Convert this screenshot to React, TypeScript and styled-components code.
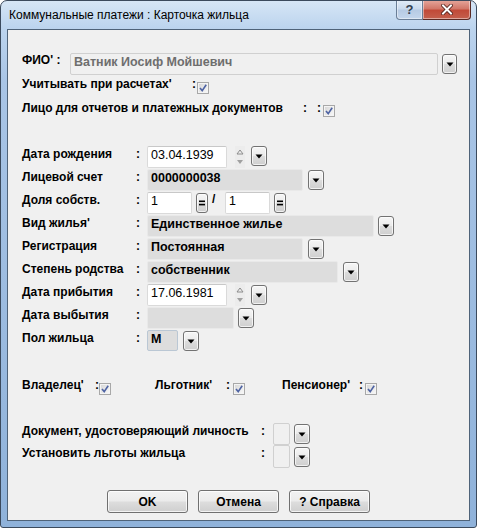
import React from "react";
import styled, { createGlobalStyle } from "styled-components";

const GlobalStyle = createGlobalStyle`
  html, body {
    margin: 0;
    padding: 0;
    background: #ffffff;
  }
  body {
    font-family: "Liberation Sans", Arial, sans-serif;
  }
`;

const Window = styled.div`
  width: 477px;
  height: 528px;
  box-sizing: border-box;
  border: 1px solid #3b4a5d;
  border-radius: 7px 7px 3px 3px;
  background: linear-gradient(
    to bottom,
    #d6e6f6 0px,
    #bcd4ee 27px,
    #a9c5e6 80px,
    #8fb2da 100%
  );
  display: flex;
  flex-direction: column;
  overflow: hidden;
`;

const TitleBar = styled.div`
  height: 28px;
  display: flex;
  align-items: center;
  padding-left: 8px;
  flex-shrink: 0;
`;

const Title = styled.div`
  flex: 1;
  font: 12px "Liberation Sans", Arial, sans-serif;
  color: #000;
`;

const CaptionButtons = styled.div`
  align-self: flex-start;
  margin-top: -1px;
  margin-right: 5px;
  display: flex;
`;

const CaptionButton = styled.div<{ $close?: boolean }>`
  height: 20px;
  width: ${({ $close }) => ($close ? "48px" : "27px")};
  box-sizing: border-box;
  display: flex;
  align-items: center;
  justify-content: center;
  border: 1px solid ${({ $close }) => ($close ? "#5a2a24" : "#6a7e97")};
  border-top: none;
  border-left: ${({ $close }) => ($close ? "none" : "1px solid #6a7e97")};
  border-radius: ${({ $close }) => ($close ? "0 0 4px 0" : "0 0 0 4px")};
  background: ${({ $close }) =>
    $close
      ? "linear-gradient(to bottom, #e6a89d 0%, #d2786a 45%, #c14a38 55%, #c4604d 100%)"
      : "linear-gradient(to bottom, #e3edf8 0%, #cbdbee 45%, #b7cbe4 55%, #c4d6ec 100%)"};
  box-shadow: inset 0 0 0 1px rgba(255, 255, 255, 0.45);
  font: bold 13px "Liberation Sans", Arial, sans-serif;
  color: #34404f;
`;

const Client = styled.div`
  flex: 1;
  margin: 0 6px 6px;
  border: 1px solid #4f6379;
  background: #f0f0f0;
  display: flex;
  flex-direction: column;
  padding: 23px 0 0 14px;
  font: bold 12px "Liberation Sans", Arial, sans-serif;
  color: #000;
`;

const Row = styled.div<{ $mt?: number; $h?: number }>`
  display: flex;
  align-items: flex-start;
  margin-top: ${({ $mt }) => $mt ?? 0}px;
  height: ${({ $h }) => ($h ? `${$h}px` : "auto")};
  flex-shrink: 0;
`;

const Label = styled.div<{ $w?: number; $pt?: number }>`
  width: ${({ $w }) => ($w ? `${$w}px` : "auto")};
  flex-shrink: 0;
  line-height: 14px;
  padding-top: ${({ $pt }) => $pt ?? 0}px;
  white-space: nowrap;
`;

const Colon = styled(Label)``;

const Field = styled.div<{ $w: number; $kind?: "white" | "grey" | "flat"; $bold?: boolean; $h?: number }>`
  width: ${({ $w }) => $w}px;
  height: ${({ $h }) => $h ?? 22}px;
  box-sizing: border-box;
  flex-shrink: 0;
  padding: 1px 3px;
  line-height: 14px;
  font-size: 12.5px;
  font-weight: ${({ $bold }) => ($bold ? "bold" : "normal")};
  white-space: nowrap;
  overflow: hidden;
  border-radius: 2px;
  ${({ $kind }) =>
    $kind === "grey"
      ? "background: #dddddd; border: 1px solid #e9e9e9; color: #000;"
      : $kind === "flat"
      ? "background: #f0f0f0; border: 1px solid #d0d0d0; color: #6e6e6e;"
      : "background: #ffffff; border: 1px solid #dadada; border-top-color: #c8c8c8; color: #000;"}
`;

const SmallButton = styled.div<{ $w?: number; $h?: number; $ml?: number; $mt?: number }>`
  width: ${({ $w }) => $w ?? 16}px;
  height: ${({ $h }) => $h ?? 20}px;
  margin-left: ${({ $ml }) => $ml ?? 4}px;
  margin-top: ${({ $mt }) => $mt ?? 1}px;
  box-sizing: border-box;
  flex-shrink: 0;
  border: 1px solid #727272;
  border-radius: 3px;
  background: linear-gradient(to bottom, #f6f6f6 0%, #ebebeb 48%, #dcdcdc 52%, #cfcfcf 100%);
  box-shadow: inset 0 0 0 1px rgba(255, 255, 255, 0.7);
  display: flex;
  align-items: center;
  justify-content: center;
  font: bold 12px "Liberation Sans", Arial, sans-serif;
  line-height: 12px;
`;

const Spinner = styled.div`
  width: 10px;
  height: 22px;
  margin-left: 8px;
  flex-shrink: 0;
  display: flex;
`;

const Slash = styled.div`
  width: 17px;
  padding-left: 4px;
  box-sizing: border-box;
  line-height: 14px;
  flex-shrink: 0;
`;

const FormGrid = styled.div`
  display: grid;
  grid-template-columns: 114px 11px 1fr;
  grid-auto-rows: 23px;
  margin-top: 29px;
  flex-shrink: 0;
`;

const Cell = styled.div`
  display: flex;
  align-items: flex-start;
`;

const CheckBoxBox = styled.div<{ $mt?: number; $ml?: number }>`
  width: 12px;
  height: 12px;
  margin-top: ${({ $mt }) => $mt ?? 0}px;
  margin-left: ${({ $ml }) => $ml ?? 0}px;
  flex-shrink: 0;
  display: flex;
`;

const ButtonBar = styled.div`
  display: flex;
  justify-content: center;
  gap: 10px;
  margin-top: 22px;
  padding-right: 14px;
`;

const DialogButton = styled.div`
  width: 81px;
  height: 23px;
  box-sizing: border-box;
  border: 1px solid #707070;
  border-radius: 3px;
  background: linear-gradient(to bottom, #f2f2f2 0%, #ebebeb 48%, #dddddd 52%, #cfcfcf 100%);
  box-shadow: inset 0 0 0 1px rgba(255, 255, 255, 0.75);
  display: flex;
  align-items: center;
  justify-content: center;
  font: bold 12px "Liberation Sans", Arial, sans-serif;
  color: #000;
`;

const Arrow = () => (
  <svg width="8" height="5" viewBox="0 0 8 5">
    <polygon points="0.5,0.5 7.5,0.5 4,4.5" fill="#000" />
  </svg>
);

const DropButton = ({ ml, mt }: { ml?: number; mt?: number }) => (
  <SmallButton $ml={ml} $mt={mt}>
    <Arrow />
  </SmallButton>
);

const EqButton = ({ ml }: { ml?: number }) => (
  <SmallButton $w={12} $ml={ml}>
    <svg width="6" height="6" viewBox="0 0 6 6">
      <rect x="0" y="0.5" width="6" height="1.6" fill="#000" />
      <rect x="0" y="3.8" width="6" height="1.6" fill="#000" />
    </svg>
  </SmallButton>
);

const SpinArrows = () => (
  <Spinner>
    <svg width="10" height="22" viewBox="0 0 10 22">
      <rect x="0" y="0" width="10" height="22" fill="#ececec" />
      <polygon points="2,8 8,8 5,4" fill="none" stroke="#8c8c8c" strokeWidth="1" />
      <polygon points="2,14 8,14 5,18" fill="#a0a0a0" />
    </svg>
  </Spinner>
);

const CheckBox = ({ mt, ml }: { mt?: number; ml?: number }) => (
  <CheckBoxBox $mt={mt} $ml={ml}>
    <svg width="12" height="12" viewBox="0 0 12 12">
      <defs>
        <linearGradient id="cbg" x1="0" y1="0" x2="1" y2="1">
          <stop offset="0" stopColor="#d8d8d8" />
          <stop offset="1" stopColor="#f7f7f7" />
        </linearGradient>
      </defs>
      <rect x="0.5" y="0.5" width="11" height="11" fill="#f4f4f4" stroke="#a8a8a8" />
      <rect x="2" y="2" width="8" height="8" fill="url(#cbg)" />
      <path d="M3 6 L5.2 8.6 L9.2 2.8" fill="none" stroke="#4e63a3" strokeWidth="1.6" />
    </svg>
  </CheckBoxBox>
);

const CloseGlyph = () => (
  <svg width="12" height="11" viewBox="0 0 12 11">
    <path d="M2 1.5 L10 9.5 M10 1.5 L2 9.5" stroke="#4a1a14" strokeWidth="3.6" strokeLinecap="square" />
    <path d="M2 1.5 L10 9.5 M10 1.5 L2 9.5" stroke="#ffffff" strokeWidth="2" strokeLinecap="square" />
  </svg>
);

type FormRow = { label: string; content: React.ReactNode };

const formRows: FormRow[] = [
  {
    label: "Дата рождения",
    content: (
      <>
        <Field $w={80}>03.04.1939</Field>
        <SpinArrows />
        <DropButton ml={6} mt={0} />
      </>
    ),
  },
  {
    label: "Лицевой счет",
    content: (
      <>
        <Field $w={156} $kind="grey" $bold>
          0000000038
        </Field>
        <DropButton ml={5} />
      </>
    ),
  },
  {
    label: "Доля собств.",
    content: (
      <>
        <Field $w={45}>1</Field>
        <EqButton ml={4} />
        <Slash>/</Slash>
        <Field $w={45}>1</Field>
        <EqButton ml={4} />
      </>
    ),
  },
  {
    label: "Вид жилья'",
    content: (
      <>
        <Field $w={227} $kind="grey" $bold>
          Единственное жилье
        </Field>
        <DropButton ml={4} />
      </>
    ),
  },
  {
    label: "Регистрация",
    content: (
      <>
        <Field $w={156} $kind="grey" $bold>
          Постоянная
        </Field>
        <DropButton ml={5} />
      </>
    ),
  },
  {
    label: "Степень родства",
    content: (
      <>
        <Field $w={191} $kind="grey" $bold>
          собственник
        </Field>
        <DropButton ml={5} />
      </>
    ),
  },
  {
    label: "Дата прибытия",
    content: (
      <>
        <Field $w={80}>17.06.1981</Field>
        <SpinArrows />
        <DropButton ml={6} />
      </>
    ),
  },
  {
    label: "Дата выбытия",
    content: (
      <>
        <Field $w={87} $kind="grey" />
        <DropButton ml={4} />
      </>
    ),
  },
  {
    label: "Пол жильца",
    content: (
      <>
        <Field $w={31} $h={21} $kind="grey" $bold style={{ borderColor: "#bac7d4" }}>
          М
        </Field>
        <DropButton ml={5} />
      </>
    ),
  },
];

export default function App() {
  return (
    <>
      <GlobalStyle />
      <Window>
        <TitleBar>
          <Title>Коммунальные платежи : Карточка жильца</Title>
          <CaptionButtons>
            <CaptionButton>?</CaptionButton>
            <CaptionButton $close>
              <CloseGlyph />
            </CaptionButton>
          </CaptionButtons>
        </TitleBar>
        <Client>
          <Row $h={22}>
            <Label $w={48}>ФИО' :</Label>
            <Field $w={368} $kind="flat" $bold>
              Ватник Иосиф Мойшевич
            </Field>
            <SmallButton $w={15} $ml={4}>
              <Arrow />
            </SmallButton>
          </Row>
          <Row $mt={2}>
            <Label $w={170}>Учитывать при расчетах'</Label>
            <Colon $w={5}>:</Colon>
            <CheckBox mt={5} />
          </Row>
          <Row $mt={7}>
            <Label $w={281}>Лицо для отчетов и платежных документов</Label>
            <Colon $w={14}>:</Colon>
            <Colon $w={6}>:</Colon>
            <CheckBox mt={4} />
          </Row>
          <FormGrid>
            {formRows.map((r) => (
              <React.Fragment key={r.label}>
                <Label $pt={1}>{r.label}</Label>
                <Colon $pt={1}>:</Colon>
                <Cell>{r.content}</Cell>
              </React.Fragment>
            ))}
          </FormGrid>
          <Row $mt={25}>
            <Label $w={73}>Владелец'</Label>
            <Colon $w={4}>:</Colon>
            <CheckBox mt={5} />
            <Label $w={71} style={{ marginLeft: 44 }}>
              Льготник'
            </Label>
            <Colon $w={7}>:</Colon>
            <CheckBox mt={5} />
            <Label $w={77} style={{ marginLeft: 37 }}>
              Пенсионер'
            </Label>
            <Colon $w={6}>:</Colon>
            <CheckBox mt={5} />
          </Row>
          <Row $mt={28} $h={22}>
            <Label $w={239} $pt={1}>
              Документ, удостоверяющий личность
            </Label>
            <Colon $w={12} $pt={1}>
              :
            </Colon>
            <Field $w={17} $kind="flat" />
            <DropButton ml={4} />
          </Row>
          <Row $h={23}>
            <Label $w={239} $pt={1}>
              Установить льготы жильца
            </Label>
            <Colon $w={12} $pt={1}>
              :
            </Colon>
            <Field $w={17} $h={23} $kind="flat" />
            <DropButton ml={4} mt={2} />
          </Row>
          <ButtonBar>
            <DialogButton>OK</DialogButton>
            <DialogButton>Отмена</DialogButton>
            <DialogButton>? Справка</DialogButton>
          </ButtonBar>
        </Client>
      </Window>
    </>
  );
}
